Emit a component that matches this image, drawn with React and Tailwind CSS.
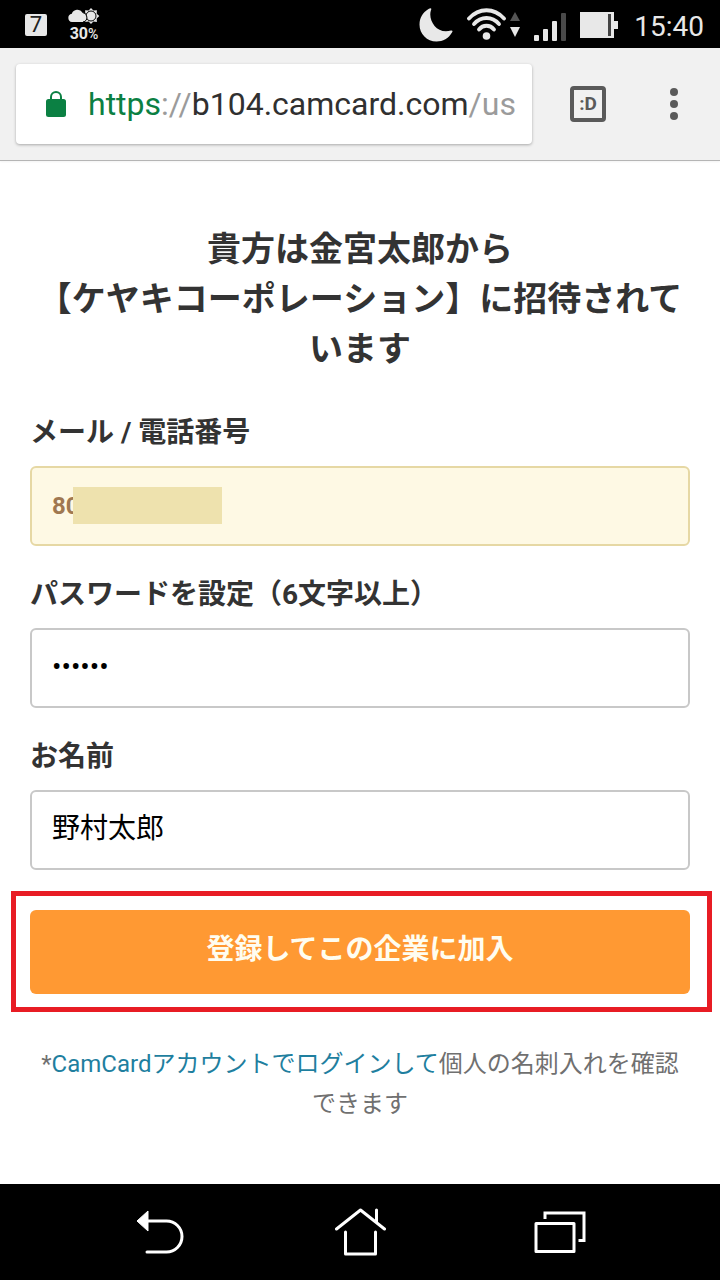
import { useState } from 'react';

function WeatherIcon() {
  return (
    <svg width="32" height="18" viewBox="0 0 32 18" className="block">
      <path d="M23 1l2.400 2.600 3.500-.4-.2 3.500L31.300 9l-2.600 2.400.2 3.500-3.500-.4L23 17l-2.400-2.500-3.500.4.2-3.500L14.700 9l2.600-2.300-.2-3.500 3.500.4z" fill="#e8e8e8" />
      <circle cx="23" cy="9" r="5" fill="#e8e8e8" stroke="#000" strokeWidth="1" />
      <path d="M4 15a4.200 4.200 0 0 1-.2-8.300A6 6 0 0 1 14.500 5.500a4.800 4.800 0 0 1 .5 9.500z" fill="#e8e8e8" />
      <path d="M14.500 5.500a4.800 4.800 0 0 1 .5 9.500" fill="none" stroke="#000" />
    </svg>
  );
}

function MoonIcon() {
  return (
    <svg width="34" height="34" viewBox="0 0 34 34" className="ml-auto">
      <path d="M9.500 1C11.500-.2 13 .3 12 2C8.500 12 18 27 32 22.500C33.500 22 34 23.500 33 24.500C29.500 30.500 24 33.500 17.500 33.500C8 33.500 0.500 26 0.500 16.500C0.500 10 3.500 4.500 9.500 1z" fill="#e8e8e8" />
    </svg>
  );
}

function WifiIcon() {
  return (
    <svg width="54" height="34" viewBox="0 0 54 34" className="ml-[14px]">
      <g fill="none" stroke="#e8e8e8" strokeWidth="3.800" strokeLinecap="round">
        <path d="M2 10.500C12-.5 27-.5 37 10.500" />
        <path d="M7 16C14 8 25 8 32 16" />
        <path d="M12 21.500C16 16.500 23 16.500 27 21.500" />
      </g>
      <circle cx="19.500" cy="28" r="3.800" fill="#e8e8e8" />
      <path d="M43 13L48 4l5 9z" fill="#555" />
      <path d="M43 19h10l-5 10z" fill="#e8e8e8" />
    </svg>
  );
}

function SignalIcon() {
  return (
    <svg width="32" height="28" viewBox="0 0 32 28" className="mt-1 ml-[13px]">
      <rect x="0" y="22" width="5" height="6" rx="1" fill="#e8e8e8" />
      <rect x="9" y="16" width="5" height="12" rx="1" fill="#e8e8e8" />
      <rect x="18" y="8" width="5" height="20" rx="1" fill="#e8e8e8" />
      <rect x="27" y="0" width="5" height="28" rx="1" fill="#4a4a4a" />
    </svg>
  );
}

function BatteryIcon() {
  return (
    <svg width="38" height="26" viewBox="0 0 38 26" className="ml-[14px]">
      <path d="M0 0h34v9h4v8h-4v9H0z" fill="#e8e8e8" />
      <rect x="28" y="2" width="3" height="22" fill="#444" />
    </svg>
  );
}

function StatusBar() {
  return (
    <div className="flex h-12 items-center bg-black pt-0.5 pr-4 pl-[25px] text-[#e8e8e8]">
      <span className="flex size-[22px] items-center justify-center rounded-xs bg-[#e8e8e8] text-[22px] leading-[22px] text-[#222]">7</span>
      <div className="ml-[21px] flex flex-col items-center">
        <WeatherIcon />
        <span className="text-[16px] leading-[18px] font-bold">
          30<span className="text-[14px] font-medium">%</span>
        </span>
      </div>
      <MoonIcon />
      <WifiIcon />
      <SignalIcon />
      <BatteryIcon />
      <span className="mt-1 ml-4 text-[28px] leading-[32px]">15:40</span>
    </div>
  );
}

function BrowserBar() {
  return (
    <div className="flex h-[113px] items-center border-b border-[#b5b5b5] bg-[#f1f1f1] pl-4 shadow-xs">
      <button
        aria-label="アドレスバー"
        className="flex h-20 min-w-0 flex-1 items-center rounded-sm bg-white pl-[30px] text-left shadow-[0_1px_3px_rgba(0,0,0,0.3)]"
      >
        <svg width="20" height="26" viewBox="0 0 20 26" className="shrink-0">
          <rect x="0" y="8" width="20" height="18" rx="2.500" fill="#0b8043" />
          <path d="M5 9V6a5 5 0 0 1 10 0v3" fill="none" stroke="#0b8043" strokeWidth="2" />
        </svg>
        <span className="ml-[22px] overflow-hidden text-[32px] leading-[40px] whitespace-nowrap text-[#303030]">
          <span className="text-[#0b8043]">https</span>
          <span className="text-[#9b9b9b]">://</span>
          b104.camcard.com
          <span className="text-[#9b9b9b]">/us</span>
        </span>
      </button>
      <button
        aria-label="タブ"
        className="ml-[38px] flex size-9 shrink-0 items-center justify-center rounded-sm border-4 border-[#5a5a5a] font-['Liberation_Sans_Narrow',Roboto] text-[19px] leading-[20px] font-bold text-[#5a5a5a]"
      >
        :D
      </button>
      <button aria-label="メニュー" className="mr-9 ml-[58px] flex w-5 shrink-0 flex-col items-center gap-1">
        <span className="size-2 rounded-full bg-[#5a5a5a]" />
        <span className="size-2 rounded-full bg-[#5a5a5a]" />
        <span className="size-2 rounded-full bg-[#5a5a5a]" />
      </button>
    </div>
  );
}

function InviteForm() {
  const [password, setPassword] = useState('123456');
  const [name, setName] = useState('野村太郎');

  return (
    <form onSubmit={(e) => e.preventDefault()}>
      <label htmlFor="account" className="block text-[28px] leading-[40px] font-bold">メール / 電話番号</label>
      <div className="relative mt-[13px]">
        <input
          id="account"
          type="text"
          value="80"
          readOnly
          className="block h-20 w-full rounded-md border-2 border-[#e6d8a4] bg-[#fef9e4] px-5 text-[24px] font-bold text-[#a07850]"
        />
        <div className="absolute top-[21px] left-[43px] h-[37px] w-[149px] bg-[#eee2ae]" />
      </div>

      <label htmlFor="password" className="mt-[29px] block text-[28px] leading-[40px] font-bold">パスワードを設定（6文字以上）</label>
      <input
        id="password"
        type="password"
        value={password}
        onChange={(e) => setPassword(e.target.value)}
        className="mt-[13px] block h-20 w-full rounded-md border-2 border-[#c8c8c8] bg-white px-5 pb-1 text-[28px] text-black"
      />

      <label htmlFor="name" className="mt-[29px] block text-[28px] leading-[40px] font-bold">お名前</label>
      <input
        id="name"
        type="text"
        value={name}
        onChange={(e) => setName(e.target.value)}
        className="mt-[13px] block h-20 w-full rounded-md border-2 border-[#c8c8c8] bg-white px-5 pb-2 text-[28px] text-black"
      />

      {/* Highlighted join button */}
      <div className="mt-[21px] -mr-[22px] -ml-[19px] border-5 border-[#e81c24] pt-[14px] pr-[17px] pb-[13px] pl-[14px]">
        <button type="submit" className="block h-[84px] w-full rounded-md bg-[#ff9933] pb-1 text-[28px] font-bold text-[#fffdf0]">
          登録してこの企業に加入
        </button>
      </div>
    </form>
  );
}

function NavBar() {
  return (
    <nav className="flex h-24 items-center justify-center gap-[148px] bg-black">
      <button aria-label="戻る">
        <svg width="52" height="50" viewBox="0 0 52 50" fill="none">
          <path d="M13 14h19.500a15.500 15.500 0 0 1 0 31H13" stroke="#fff" strokeWidth="3" strokeLinecap="round" />
          <path d="M3 14L14 4v20z" fill="#fff" stroke="#fff" strokeLinejoin="round" />
        </svg>
      </button>
      <button aria-label="ホーム">
        <svg width="52" height="50" viewBox="0 0 52 50" fill="none" stroke="#fff" strokeWidth="3" strokeLinecap="round" strokeLinejoin="round">
          <path d="M2.500 22L26.500 3l24 19M42.500 3v12.500M11.500 25v22h30V25" />
        </svg>
      </button>
      <button aria-label="最近使ったアプリ">
        <svg width="52" height="50" viewBox="0 0 52 50" fill="none" stroke="#fff" strokeWidth="3">
          <rect x="2" y="16.500" width="38" height="28" strokeLinejoin="round" />
          <path d="M11 12V6h39v27.500h-5.500" />
        </svg>
      </button>
    </nav>
  );
}

function App() {
  return (
    <div className="flex min-h-screen flex-col bg-white font-[Roboto,'Noto_Sans_CJK_JP',sans-serif] text-[#333]">
      <StatusBar />
      <BrowserBar />

      <main className="flex-1 px-[30px] pt-[63px] pb-10">
        <h1 className="text-center text-[34px] leading-[50px] font-bold">
          貴方は金宮太郎から
          <br />
          【ケヤキコーポレーション】に招待されています
        </h1>

        <div className="mt-[39px]">
          <InviteForm />
        </div>

        <p className="mt-8 text-center text-[24px] leading-[40px] text-[#707070]">
          *<a href="#login" className="text-[#1f7f9f]">CamCardアカウントでログインして</a>個人の名刺入れを確認できます
        </p>
      </main>

      <NavBar />
    </div>
  );
}

export default App;
